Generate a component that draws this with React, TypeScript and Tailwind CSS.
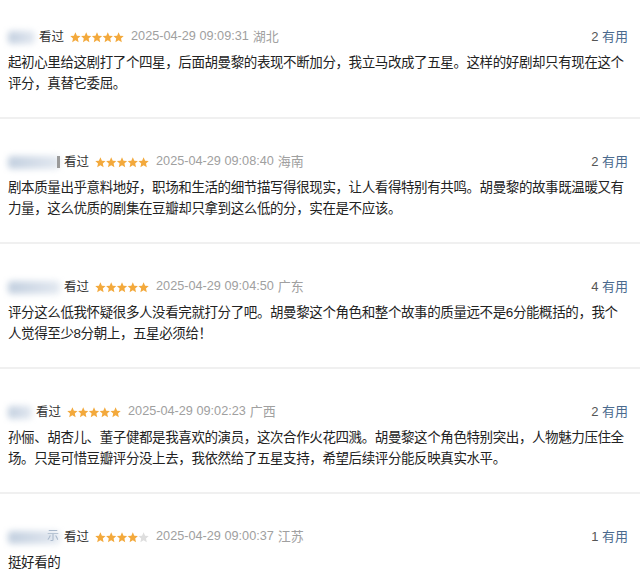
import React from 'react'

type Review = {
  nameW: number
  mark?: 'bar' | 'ghost'
  stars: number
  date: string
  region: string
  useful: number
  lines: string[]
}

const reviews: Review[] = [
  {
    nameW: 27,
    stars: 5,
    date: '2025-04-29 09:09:31',
    region: '湖北',
    useful: 2,
    lines: [
      '起初心里给这剧打了个四星，后面胡曼黎的表现不断加分，我立马改成了五星。这样的好剧却只有现在这个',
      '评分，真替它委屈。',
    ],
  },
  {
    nameW: 52,
    mark: 'bar',
    stars: 5,
    date: '2025-04-29 09:08:40',
    region: '海南',
    useful: 2,
    lines: [
      '剧本质量出乎意料地好，职场和生活的细节描写得很现实，让人看得特别有共鸣。胡曼黎的故事既温暖又有',
      '力量，这么优质的剧集在豆瓣却只拿到这么低的分，实在是不应该。',
    ],
  },
  {
    nameW: 52,
    stars: 5,
    date: '2025-04-29 09:04:50',
    region: '广东',
    useful: 4,
    lines: [
      '评分这么低我怀疑很多人没看完就打分了吧。胡曼黎这个角色和整个故事的质量远不是6分能概括的，我个',
      '人觉得至少8分朝上，五星必须给！',
    ],
  },
  {
    nameW: 24,
    stars: 5,
    date: '2025-04-29 09:02:23',
    region: '广西',
    useful: 2,
    lines: [
      '孙俪、胡杏儿、董子健都是我喜欢的演员，这次合作火花四溅。胡曼黎这个角色特别突出，人物魅力压住全',
      '场。只是可惜豆瓣评分没上去，我依然给了五星支持，希望后续评分能反映真实水平。',
    ],
  },
  {
    nameW: 52,
    mark: 'ghost',
    stars: 4,
    date: '2025-04-29 09:00:37',
    region: '江苏',
    useful: 1,
    lines: ['挺好看的'],
  },
]

function Stars({ count }: { count: number }) {
  return (
    <svg width="54" height="11" viewBox="0 0 54 11" className="shrink-0">
      {[0, 1, 2, 3, 4].map((i) => (
        <polygon
          key={i}
          transform={`translate(${i * 10.8} 0)`}
          points="5.4,0.3 6.9,3.7 10.5,4 7.8,6.4 8.6,10.2 5.4,8.2 2.2,10.2 3,6.4 0.3,4 3.9,3.7"
          fill={i < count ? '#f3a93c' : '#dedede'}
        />
      ))}
    </svg>
  )
}

function Name({ w, mark }: { w: number; mark?: 'bar' | 'ghost' }) {
  return (
    <div className="relative flex h-[16px] shrink-0 items-center" style={{ width: w }}>
      <div className="h-[13px] w-full rounded-[4px] bg-gradient-to-r from-[#c2cfdf] via-[#d3dce8] to-[#e3e9f1] blur-[3px]" />
      {mark === 'bar' && <div className="absolute right-0 top-[2px] h-[12px] w-[3px] bg-[#9a9a9a] blur-[0.6px]" />}
      {mark === 'ghost' && (
        <span className="absolute right-[1px] top-[-1px] text-[12px] leading-[16px] text-[#a9b8cb] blur-[0.5px]">示</span>
      )}
    </div>
  )
}

export default function App() {
  return (
    <div
      className="min-h-[586px] w-[640px] overflow-hidden bg-white"
      style={{ fontFamily: '"Liberation Sans", "Noto Sans CJK SC", sans-serif' }}
    >
      {reviews.map((r, idx) => (
        <div
          key={idx}
          className={`pl-[8px] pr-[12px] pb-[23px] ${idx === 0 ? 'pt-[27px]' : 'pt-[33px]'} ${
            idx < reviews.length - 1 ? 'border-b-2 border-[#f0f0f0]' : ''
          }`}
        >
          <div className="flex h-[20px] items-center justify-between">
            <div className="flex items-center">
              <Name w={r.nameW} mark={r.mark} />
              <span className="ml-[4px] text-[12.5px] text-[#333]">看过</span>
              <span className="ml-[6px] flex items-center">
                <Stars count={r.stars} />
              </span>
              <span className="ml-[7px] text-[12.7px] text-[#a0a0a0]">{r.date}</span>
              <span className="ml-[4px] text-[13px] text-[#a0a0a0]">{r.region}</span>
            </div>
            <div className="text-[13px] text-[#555]">
              {r.useful} <span className="text-[#4a6a8e]">有用</span>
            </div>
          </div>
          <p className="mt-[5px] whitespace-nowrap text-[13.5px] leading-[21px] tracking-[-0.4px] text-[#222]">
            {r.lines.map((l, i) => (
              <React.Fragment key={i}>
                {i > 0 && <br />}
                {l}
              </React.Fragment>
            ))}
          </p>
        </div>
      ))}
    </div>
  )
}
